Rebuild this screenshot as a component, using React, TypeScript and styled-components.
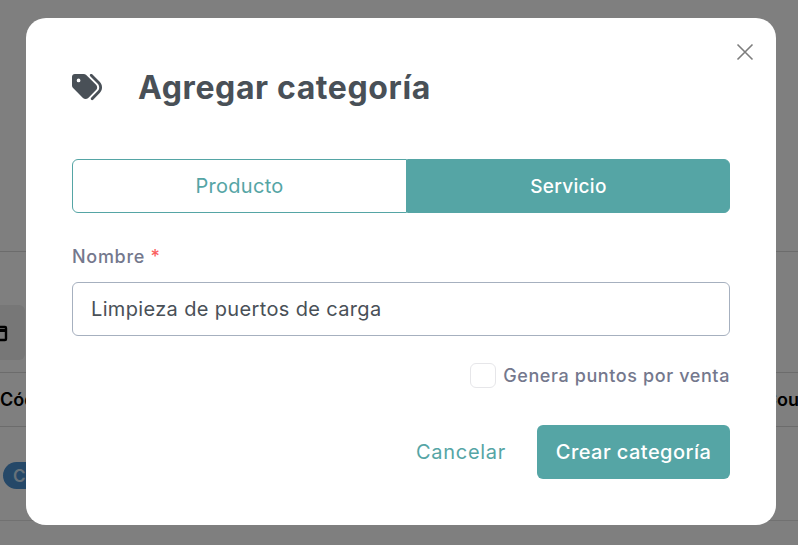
import React from "react";
import styled, { createGlobalStyle } from "styled-components";
import { FaTags } from "react-icons/fa6";

const Global = createGlobalStyle`
  html, body { margin: 0; padding: 0; background: #fff; }
  body { font-family: "Inter", "Noto Sans", sans-serif; }
  * { box-sizing: border-box; }
`;

const Page = styled.div`
  position: relative;
  width: 798px;
  height: 545px;
  overflow: hidden;
  background: #fff;
`;

const Hero = styled.div`
  height: 252px;
  border-bottom: 1px solid #d9d9d9;
`;

const Toolbar = styled.div`
  height: 120px;
  padding-top: 53px;
  display: flex;
  align-items: flex-start;
`;

const ToolButton = styled.div`
  width: 25px;
  height: 55px;
  background: #eeeeee;
  border-radius: 0 6px 6px 0;
  display: flex;
  align-items: center;
  justify-content: flex-end;
  padding-right: 17px;
  svg { flex-shrink: 0; }
`;

const HeaderRow = styled.div`
  height: 55px;
  border-top: 1px solid #d9d9d9;
  border-bottom: 1px solid #d9d9d9;
  display: flex;
  justify-content: space-between;
  align-items: center;
  font-size: 18px;
  font-weight: 600;
  color: #000;
`;

const ClippedHead = styled.span`
  margin-right: -1px;
`;

const BodyRow = styled.div`
  height: 94px;
  border-bottom: 1px solid #e3e3e3;
  padding: 35px 0 0 3px;
`;

const Badge = styled.span`
  display: inline-flex;
  align-items: center;
  width: 60px;
  height: 27px;
  padding-left: 10px;
  border-radius: 14px;
  background: #4a90d0;
  color: #cfe2f3;
  font-size: 17px;
  font-weight: 600;
`;

const Overlay = styled.div`
  position: absolute;
  inset: 0;
  background: rgba(0, 0, 0, 0.5);
`;

const Dialog = styled.div`
  position: absolute;
  left: 26px;
  top: 18px;
  width: 750px;
  height: 507px;
  background: #fff;
  border-radius: 20px;
  padding: 46px 46px 0;
  display: flex;
  flex-direction: column;
`;

const CloseButton = styled.button`
  position: absolute;
  top: 25px;
  right: 22px;
  width: 18px;
  height: 18px;
  padding: 0;
  border: 0;
  background: none;
  color: #7d7d7d;
  display: flex;
`;

const Heading = styled.div`
  display: flex;
  align-items: center;
  height: 46px;
  color: #495057;
`;

const HeadingIcon = styled.span`
  width: 66px;
  display: flex;
  font-size: 30px;
`;

const Title = styled.h2`
  margin: 0;
  font-size: 32px;
  font-weight: 700;
  letter-spacing: 0.6px;
  color: #495057;
`;

const Tabs = styled.div`
  margin-top: 49px;
  display: flex;
  height: 54px;
`;

const Tab = styled.div<{ $active?: boolean; $width: number }>`
  width: ${(p) => p.$width}px;
  display: flex;
  align-items: center;
  justify-content: center;
  font-size: ${(p) => (p.$active ? 19 : 20)}px;
  letter-spacing: 0.3px;
  font-weight: ${(p) => (p.$active ? 500 : 400)};
  color: ${(p) => (p.$active ? "#fff" : "#55a5a5")};
  background: ${(p) => (p.$active ? "#55a5a5" : "#fff")};
  border: 1px solid #55a5a5;
  border-radius: ${(p) => (p.$active ? "0 6px 6px 0" : "6px 0 0 6px")};
`;

const FieldLabel = styled.label`
  margin-top: 32px;
  font-size: 18px;
  line-height: 24px;
  font-weight: 500;
  letter-spacing: 0.7px;
  color: #74788d;
`;

const Required = styled.span`
  color: #fa5f5f;
`;

const TextInput = styled.input`
  margin-top: 13px;
  height: 54px;
  width: 100%;
  padding: 0 18px;
  border: 1px solid #a6b0bf;
  border-radius: 6px;
  font: 400 20px "Inter", "Noto Sans", sans-serif;
  letter-spacing: 0.35px;
  color: #495057;
  outline: none;
`;

const CheckRow = styled.label`
  margin-top: 27px;
  display: flex;
  justify-content: flex-end;
  align-items: center;
  gap: 7px;
  font-size: 18px;
  font-weight: 500;
  letter-spacing: 0.6px;
  color: #74788d;
`;

const CheckBox = styled.input`
  appearance: none;
  margin: 0;
  width: 26px;
  height: 25px;
  border: 1px solid #e6e6e9;
  border-radius: 6px;
  background: #fff;
`;

const Actions = styled.div`
  margin-top: 37px;
  display: flex;
  justify-content: flex-end;
  align-items: center;
  gap: 31px;
`;

const CancelButton = styled.button`
  padding: 0;
  border: 0;
  background: none;
  font: 400 20px "Inter", "Noto Sans", sans-serif;
  letter-spacing: 0.7px;
  color: #55a5a5;
`;

const SubmitButton = styled.button`
  width: 193px;
  height: 54px;
  padding: 0;
  border: 0;
  border-radius: 6px;
  background: #55a5a5;
  font: 500 20px "Inter", "Noto Sans", sans-serif;
  letter-spacing: 0.45px;
  color: #fff;
`;

export default function App() {
  return (
    <Page>
      <Global />
      <Hero />
      <Toolbar>
        <ToolButton>
          <svg width="16" height="18" viewBox="0 0 16 18" fill="none" stroke="#000" strokeWidth="2.4">
            <rect x="2" y="3" width="12" height="13" rx="1" />
            <path d="M2 6.5h12" strokeWidth="3" />
          </svg>
        </ToolButton>
      </Toolbar>
      <HeaderRow>
        <span>Código</span>
        <ClippedHead>Cou</ClippedHead>
      </HeaderRow>
      <BodyRow>
        <Badge>Cat</Badge>
      </BodyRow>
      <Overlay />
      <Dialog role="dialog">
        <CloseButton aria-label="Cerrar">
          <svg width="18" height="18" viewBox="0 0 18 18" fill="none" stroke="currentColor" strokeWidth="1.6">
            <path d="M1.5 1.5l15 15M16.5 1.5l-15 15" />
          </svg>
        </CloseButton>
        <Heading>
          <HeadingIcon>
            <FaTags />
          </HeadingIcon>
          <Title>Agregar categoría</Title>
        </Heading>
        <Tabs>
          <Tab $width={335}>Producto</Tab>
          <Tab $width={323} $active>
            Servicio
          </Tab>
        </Tabs>
        <FieldLabel>
          Nombre <Required>*</Required>
        </FieldLabel>
        <TextInput defaultValue="Limpieza de puertos de carga" />
        <CheckRow>
          <CheckBox type="checkbox" />
          Genera puntos por venta
        </CheckRow>
        <Actions>
          <CancelButton>Cancelar</CancelButton>
          <SubmitButton>Crear categoría</SubmitButton>
        </Actions>
      </Dialog>
    </Page>
  );
}
